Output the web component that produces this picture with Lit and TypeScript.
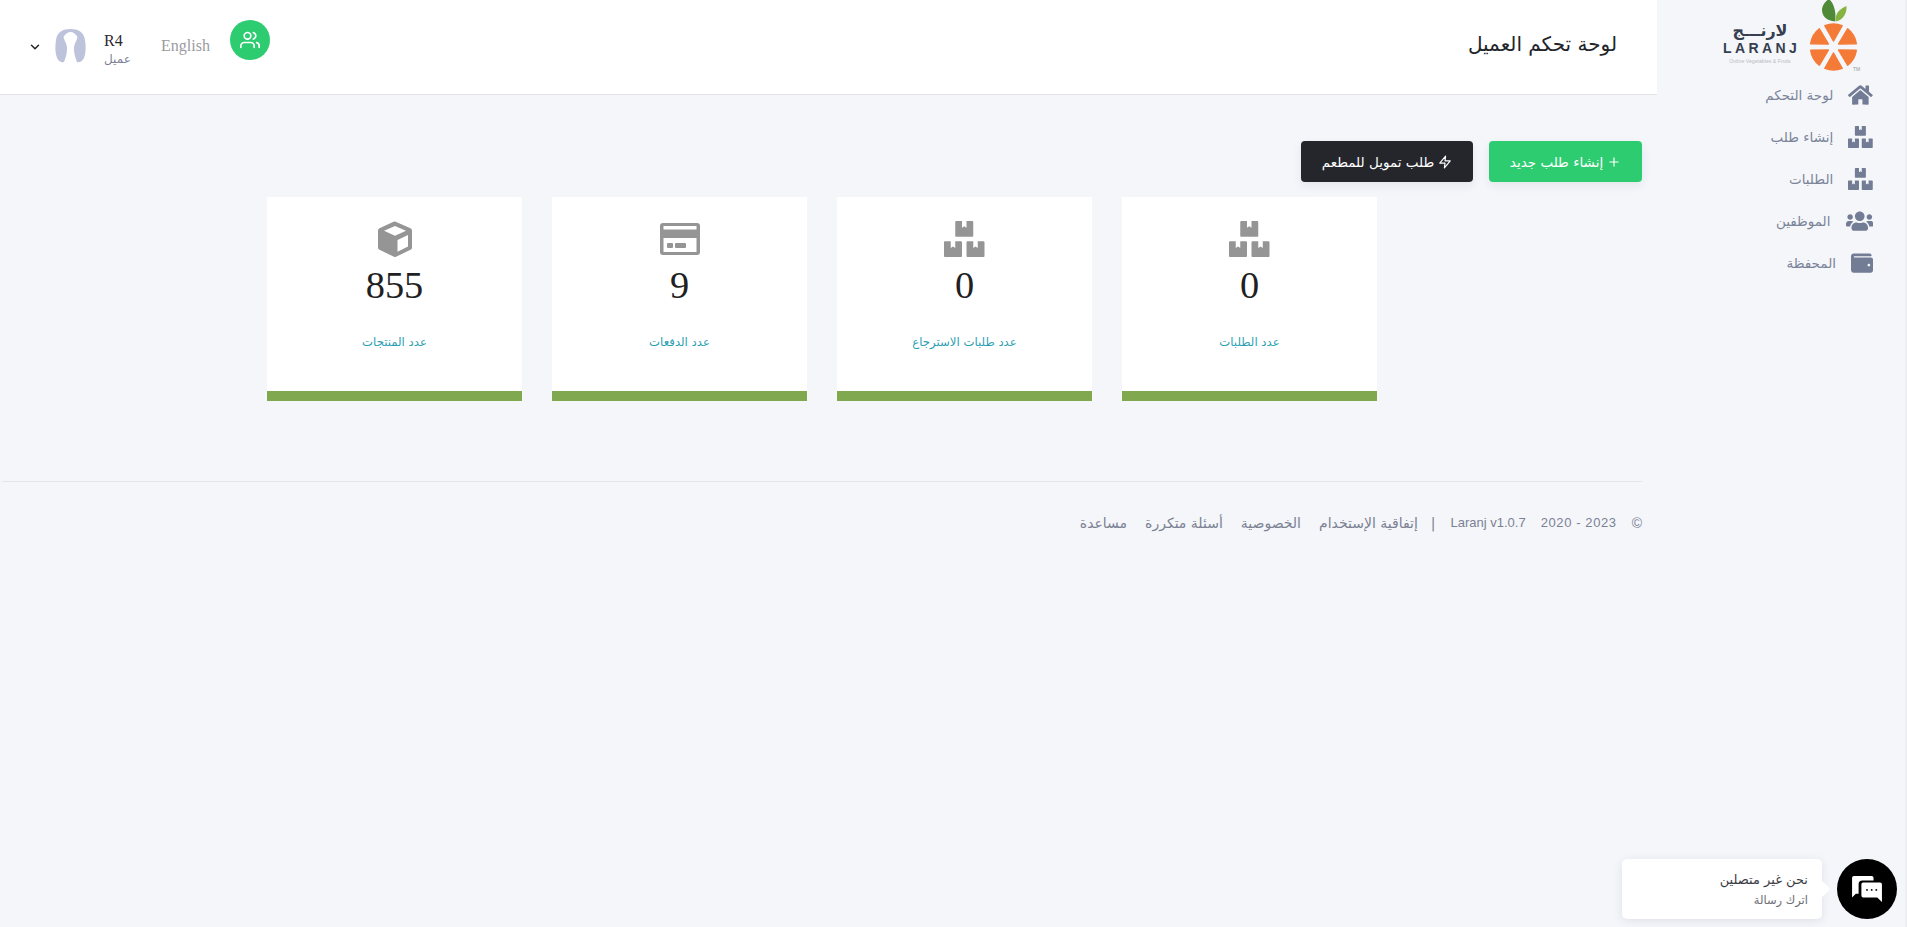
import { LitElement, html, css, svg } from 'lit';
import { customElement } from 'lit/decorators.js';

const AR = css`"DejaVu Sans", sans-serif`;

const icons = {
  home: { vb: '0 0 576 512', d: 'M280.37 148.26L96 300.11V464a16 16 0 0 0 16 16l112.06-.29a16 16 0 0 0 15.92-16V368a16 16 0 0 1 16-16h64a16 16 0 0 1 16 16v95.64a16 16 0 0 0 16 16.05L464 480a16 16 0 0 0 16-16V300L295.67 148.26a12.19 12.19 0 0 0-15.3 0zM571.6 251.47L488 182.56V44.05a12 12 0 0 0-12-12h-56a12 12 0 0 0-12 12v72.61L318.47 43a48 48 0 0 0-61 0L4.34 251.47a12 12 0 0 0-1.6 16.9l25.5 31A12 12 0 0 0 45.15 301l235.22-193.74a12.19 12.19 0 0 1 15.3 0L530.9 301a12 12 0 0 0 16.9-1.6l25.5-31a12 12 0 0 0-1.7-16.93z' },
  boxes: { vb: '0 0 576 512', d: 'M560 288h-80v96l-32-21.3-32 21.3v-96h-80c-8.8 0-16 7.2-16 16v192c0 8.8 7.2 16 16 16h224c8.8 0 16-7.2 16-16V304c0-8.8-7.2-16-16-16zm-384-64h224c8.8 0 16-7.2 16-16V16c0-8.8-7.2-16-16-16h-80v96l-32-21.3L256 96V0h-80c-8.8 0-16 7.2-16 16v192c0 8.8 7.2 16 16 16zm64 64h-80v96l-32-21.3L96 384v-96H16c-8.8 0-16 7.2-16 16v192c0 8.8 7.2 16 16 16h224c8.8 0 16-7.2 16-16V304c0-8.8-7.2-16-16-16z' },
  users: { vb: '0 0 640 512', d: 'M96 224c35.3 0 64-28.7 64-64s-28.7-64-64-64-64 28.7-64 64 28.7 64 64 64zm448 0c35.3 0 64-28.7 64-64s-28.7-64-64-64-64 28.7-64 64 28.7 64 64 64zm32 32h-64c-17.6 0-33.5 7.1-45.1 18.6 40.3 22.1 68.9 62 75.1 109.4h66c17.7 0 32-14.3 32-32v-32c0-35.3-28.7-64-64-64zm-256 0c61.9 0 112-50.1 112-112S381.9 32 320 32 208 82.1 208 144s50.1 112 112 112zm76.8 32h-8.3c-20.8 10-43.9 16-68.5 16s-47.6-6-68.5-16h-8.3C179.6 288 128 339.6 128 403.2V432c0 26.5 21.5 48 48 48h288c26.5 0 48-21.5 48-48v-28.8c0-63.6-51.6-115.2-115.2-115.2zm-223.7-13.4C161.5 263.1 145.6 256 128 256H64c-35.3 0-64 28.7-64 64v32c0 17.7 14.3 32 32 32h65.9c6.3-47.4 34.9-87.3 75.2-109.4z' },
  wallet: { vb: '0 0 512 512', d: 'M461.2 128H80c-8.84 0-16-7.16-16-16s7.16-16 16-16h384c8.84 0 16-7.16 16-16 0-26.51-21.49-48-48-48H64C28.65 32 0 60.65 0 96v320c0 35.35 28.65 64 64 64h397.2c28.02 0 50.8-21.53 50.8-48V176c0-26.47-22.78-48-50.8-48zM416 336c-17.67 0-32-14.33-32-32s14.33-32 32-32 32 14.33 32 32-14.33 32-32 32z' },
};

type IconName = keyof typeof icons;

function faIcon(name: IconName, cls: string) {
  const i = icons[name];
  return html`<svg class=${cls} viewBox=${i.vb} fill="currentColor"><path d=${i.d}></path></svg>`;
}

const cubeIcon = html`<svg class="stat-svg" viewBox="0 0 36 36">
  <path fill="#959595" d="M18 0.5 L33.5 7.3 Q35 8 35 9.6 V26.4 Q35 28 33.5 28.8 L19 35.8 Q18 36.2 17 35.8 L2.5 28.8 Q1 28 1 26.4 V9.6 Q1 8 2.5 7.3 L16 0.9 Q17 0.3 18 0.5Z"></path>
  <path fill="#fff" d="M18 5 L29 9.7 L18 14.8 L7 9.7Z"></path>
  <path fill="#fff" d="M20.5 19 L31 14 V25.6 L20.5 30.8Z"></path>
</svg>`;

const cardIcon = html`<svg class="stat-svg" viewBox="0 0 40 36">
  <rect x="0" y="2" width="40" height="32" rx="3" fill="#959595"></rect>
  <rect x="3.5" y="5" width="33" height="3.5" fill="#fff"></rect>
  <rect x="3.5" y="17" width="33" height="14" fill="#fff"></rect>
  <rect x="7" y="22" width="6" height="5" rx="1" fill="#959595"></rect>
  <rect x="15" y="22" width="11" height="5" rx="1" fill="#959595"></rect>
</svg>`;

// orange slices, six wedges round the centre of the mark
function wedge(deg: number) {
  const cx = 23.5, cy = 47, r = 23, half = 22;
  const pt = (a: number, d: number) => {
    const t = (a * Math.PI) / 180;
    return `${(cx + d * Math.cos(t)).toFixed(2)} ${(cy + d * Math.sin(t)).toFixed(2)}`;
  };
  return `M${pt(deg, 6)} L${pt(deg - half, r)} A${r} ${r} 0 0 1 ${pt(deg + half, r)}Z`;
}

const logoMark = svg`
  <path fill="#4f8a38" d="M25 21.500 C17 21 11.500 16 12 9 C12.500 5 15 2 17.500 0 L20 0 C24 4 26.500 13 25 21.500Z"></path>
  <path fill="#85b441" d="M25.500 21.500 C25 14 29 9 36.500 6 C37 13 33.500 20 25.500 21.500Z"></path>
  <g fill="#f47b37" stroke="#f47b37" stroke-width="1.5" stroke-linejoin="round">
    ${[-90, -30, 30, 90, 150, 210].map(a => svg`<path d=${wedge(a)}></path>`)}
  </g>`;

@customElement('app-root')
export class AppRoot extends LitElement {
  static styles = css`
    :host {
      display: block;
      height: 927px;
      overflow: hidden;
      background: #f4f6fa;
      direction: rtl;
      font-family: ${AR};
      position: relative;
    }
    .layout { display: flex; height: 100%; }

    .sidebar { width: 250px; flex: none; box-sizing: border-box; border-right: 2px solid #eceef2; }
    .logo {
      height: 80px; padding-right: 48px; box-sizing: border-box;
      display: flex; align-items: flex-start; gap: 13px;
    }
    .logo-mark { width: 47px; height: 72px; flex: none; }
    .logo-text {
      padding-top: 21px; width: 74px; text-align: center; direction: ltr; color: #353f4f;
    }
    .logo-ar { font-size: 16px; font-weight: 700; line-height: 20px; direction: rtl; }
    .logo-en { font-family: "Liberation Sans", sans-serif; font-size: 14px; letter-spacing: 3.4px; line-height: 14px; font-weight: 700; white-space: nowrap; }
    .logo-sub { font-family: "Liberation Sans", sans-serif; font-size: 5.2px; color: #b9bcc1; line-height: 8px; margin-top: 2px; white-space: nowrap; }
    .tm { position: absolute; font-family: "Liberation Sans", sans-serif; font-size: 5px; color: #999; left: 1853px; top: 66px; }
    .menu { display: flex; flex-direction: column; padding-right: 32px; margin-top: -6px; }
    .menu-item {
      height: 42px; display: flex; align-items: center; gap: 15px;
      color: #7b8499; font-size: 13.5px;
    }
    .nav-icon { height: 22px; color: #727c94; flex: none; }

    .main { flex: 1; min-width: 0; display: flex; flex-direction: column; }
    .topbar {
      height: 95px; flex: none; box-sizing: border-box; background: #fff;
      border-bottom: 1px solid #e2e3e7;
      display: flex; align-items: center; justify-content: space-between;
      padding: 0 40px 0 0;
    }
    .title { font-size: 20px; color: #212529; margin-bottom: 6px; }
    .top-left { display: flex; align-items: flex-start; height: 95px; }
    .users-btn {
      width: 40px; height: 40px; border-radius: 50%; background: #2ecc71; margin-top: 20px;
      display: flex; align-items: center; justify-content: center; color: #fff;
    }
    .users-btn svg { width: 20px; height: 20px; }
    .lang {
      font-family: "Liberation Serif", serif; font-size: 16px; line-height: 20px; color: #9b9a9f;
      margin: 36px 20px 0 30px; direction: ltr;
    }
    .who { margin: 31px 0 0 0; width: 27px; }
    .who-name { font-family: "Liberation Serif", serif; font-size: 16px; color: #2b2730; line-height: 20px; text-align: left; }
    .who-role { font-size: 12px; color: #7e7f96; line-height: 16px; text-align: left; }
    .avatar { width: 31px; height: 34px; margin: 29px 18px 0 0; flex: none; }
    .chev { width: 14px; height: 14px; margin: 40px 13px 0 28px; color: #23222a; flex: none; }

    .content { padding: 46px 15px 0 15px; flex: 1; }
    .actions { display: flex; gap: 16px; }
    .btn {
      height: 41px; border-radius: 4px; display: flex; align-items: center; justify-content: center;
      gap: 4px; color: #fff; font-size: 13.5px;
      box-shadow: 0 4px 10px rgba(40, 50, 80, 0.08); box-sizing: border-box;
    }
    .btn-green { width: 153px; background: #2ecc71; }
    .btn-dark { width: 172px; background: #25252c; }
    .btn svg { width: 14px; height: 14px; flex: none; }

    .stats { display: flex; gap: 30px; margin: 15px 265px 0 0; }
    .stat {
      width: 255px; height: 204px; box-sizing: border-box; background: #fff;
      border-bottom: 10px solid #80a94f; text-align: center; padding-top: 24px;
    }
    .stat-icon { height: 36px; display: flex; justify-content: center; color: #959595; }
    .stat-icon svg { height: 36px; color: #959595; }
    .stat-num {
      font-family: "Liberation Serif", serif; font-size: 38.4px; line-height: 46px;
      color: #1f1f24; margin-top: 5px;
    }
    .stat-label { font-size: 11.7px; color: #2d9fb2; margin-top: 26px; line-height: 16px; }

    .footer {
      margin: 80px 0 0 -13px; border-top: 1px solid #e2e4e9; padding: 32px 0 0 0;
      display: flex; align-items: center; color: #7b8193; font-size: 14px; height: 17px;
    }
    .f-copy { font-family: "Liberation Sans", sans-serif; margin-left: 15px; }
    .f-years { font-family: "Liberation Sans", sans-serif; direction: ltr; margin-left: 15px; font-size: 13px; letter-spacing: 0.6px; }
    .f-ver { font-family: "Liberation Sans", sans-serif; direction: ltr; margin-left: 15px; font-size: 13px; }
    .f-sep { margin-left: 13px; }
    .f-link { margin-left: 18px; }

    .chat-box {
      position: absolute; left: 1622px; top: 859px; width: 200px; height: 60px; box-sizing: border-box;
      background: #fff; border-radius: 5px; box-shadow: 0 2px 10px rgba(30, 40, 70, 0.1);
      padding: 10px 14px 0 0; font-size: 13px; color: #3c3c44;
    }
    .chat-box::after {
      content: ''; position: absolute; left: 100%; top: 24px; width: 12px; height: 12px;
      background: #fff; transform: translateX(-6px) rotate(45deg); border-radius: 2px;
    }
    .chat-line { line-height: 21px; }
    .chat-sub { font-size: 11.5px; color: #6e6e75; line-height: 20px; }
    .chat-btn {
      position: absolute; left: 1837px; top: 859px; width: 60px; height: 60px; border-radius: 50%;
      background: #000; display: flex; align-items: center; justify-content: center;
    }
    .chat-btn svg { width: 32px; height: 28px; }
  `;

  render() {
    const menu: { icon: IconName; label: string }[] = [
      { icon: 'home', label: 'لوحة التحكم' },
      { icon: 'boxes', label: 'إنشاء طلب' },
      { icon: 'boxes', label: 'الطلبات' },
      { icon: 'users', label: 'الموظفين' },
      { icon: 'wallet', label: 'المحفظة' },
    ];
    const stats = [
      { icon: faIcon('boxes', ''), num: '0', label: 'عدد الطلبات' },
      { icon: faIcon('boxes', ''), num: '0', label: 'عدد طلبات الاسترجاع' },
      { icon: cardIcon, num: '9', label: 'عدد الدفعات' },
      { icon: cubeIcon, num: '855', label: 'عدد المنتجات' },
    ];
    return html`
      <div class="layout">
        <aside class="sidebar">
          <div class="logo">
            <svg class="logo-mark" viewBox="0 0 47 72">${logoMark}</svg>
            <div class="logo-text">
              <div class="logo-ar">لارنـــج</div>
              <div class="logo-en">LARANJ</div>
              <div class="logo-sub">Online Vegetables &amp; Fruits</div>
            </div>
          </div>
          <nav class="menu">
            ${menu.map(m => html`<div class="menu-item">${faIcon(m.icon, 'nav-icon')}<span>${m.label}</span></div>`)}
          </nav>
        </aside>
        <div class="main">
          <header class="topbar">
            <div class="title">لوحة تحكم العميل</div>
            <div class="top-left">
              <div class="users-btn">
                <svg viewBox="0 0 24 24" fill="none" stroke="currentColor" stroke-width="2" stroke-linecap="round" stroke-linejoin="round">
                  <path d="M17 21v-2a4 4 0 0 0-4-4H5a4 4 0 0 0-4 4v2"></path>
                  <circle cx="9" cy="7" r="4"></circle>
                  <path d="M23 21v-2a4 4 0 0 0-3-3.87"></path>
                  <path d="M16 3.130a4 4 0 0 1 0 7.750"></path>
                </svg>
              </div>
              <div class="lang">English</div>
              <div class="who">
                <div class="who-name">R4</div>
                <div class="who-role">عميل</div>
              </div>
              <svg class="avatar" viewBox="0 0 31 34">
                <path fill="#bec3dc" d="M15.500 0 C23 0 29 3 30 11 C31 17 31 24 29 29 C27 33 24 34 22 33 C21 30 20 28 19.500 25 C19 22 19 20 19 18 C19.500 14 22 11 22.500 8 C21 5 18 3 15.500 3 C13 3 10 5 8.500 8 C9 11 11.500 14 12 18 C12 20 12 22 11.500 25 C11 28 10 30 9 33 C7 34 4 33 2 29 C0 24 0 17 1 11 C2 3 8 0 15.500 0Z"></path>
              </svg>
              <svg class="chev" viewBox="0 0 24 24" fill="none" stroke="currentColor" stroke-width="2.5" stroke-linecap="round" stroke-linejoin="round"><path d="M6 9l6 6 6-6"></path></svg>
            </div>
          </header>
          <main class="content">
            <div class="actions">
              <div class="btn btn-green">
                <svg viewBox="0 0 24 24" fill="none" stroke="currentColor" stroke-width="2" stroke-linecap="round"><path d="M12 5v14M5 12h14"></path></svg>
                <span>إنشاء طلب جديد</span>
              </div>
              <div class="btn btn-dark">
                <svg viewBox="0 0 24 24" fill="none" stroke="currentColor" stroke-width="2" stroke-linejoin="round"><path d="M13 2L3 14h9l-1 8 10-12h-9l1-8z"></path></svg>
                <span>طلب تمويل للمطعم</span>
              </div>
            </div>
            <div class="stats">
              ${stats.map(s => html`
                <div class="stat">
                  <div class="stat-icon">${s.icon}</div>
                  <div class="stat-num">${s.num}</div>
                  <div class="stat-label">${s.label}</div>
                </div>`)}
            </div>
            <footer class="footer">
              <span class="f-copy">©</span>
              <span class="f-years">2020 - 2023</span>
              <span class="f-ver">Laranj v1.0.7</span>
              <span class="f-sep">|</span>
              <span class="f-link">إتفاقية الإستخدام</span>
              <span class="f-link">الخصوصية</span>
              <span class="f-link">أسئلة متكررة</span>
              <span class="f-link">مساعدة</span>
            </footer>
          </main>
        </div>
      </div>
      <span class="tm">TM</span>
      <div class="chat-box">
        <div class="chat-line">نحن غير متصلين</div>
        <div class="chat-sub">اترك رسالة</div>
      </div>
      <div class="chat-btn">
        <svg viewBox="0 0 34 30">
          <path fill="#fff" d="M3 1 H22 Q24 1 24 3 V6 H12 Q8 6 8 10 V20 H5 L1 24 V3 Q1 1 3 1Z"></path>
          <path fill="#fff" d="M13 8 H31 Q33 8 33 10 V29 L28 24 H13 Q11 24 11 22 V10 Q11 8 13 8Z"></path>
          <circle cx="17" cy="16" r="1" fill="#000"></circle><circle cx="22" cy="16" r="1" fill="#000"></circle><circle cx="27" cy="16" r="1" fill="#000"></circle>
        </svg>
      </div>
    `;
  }
}
